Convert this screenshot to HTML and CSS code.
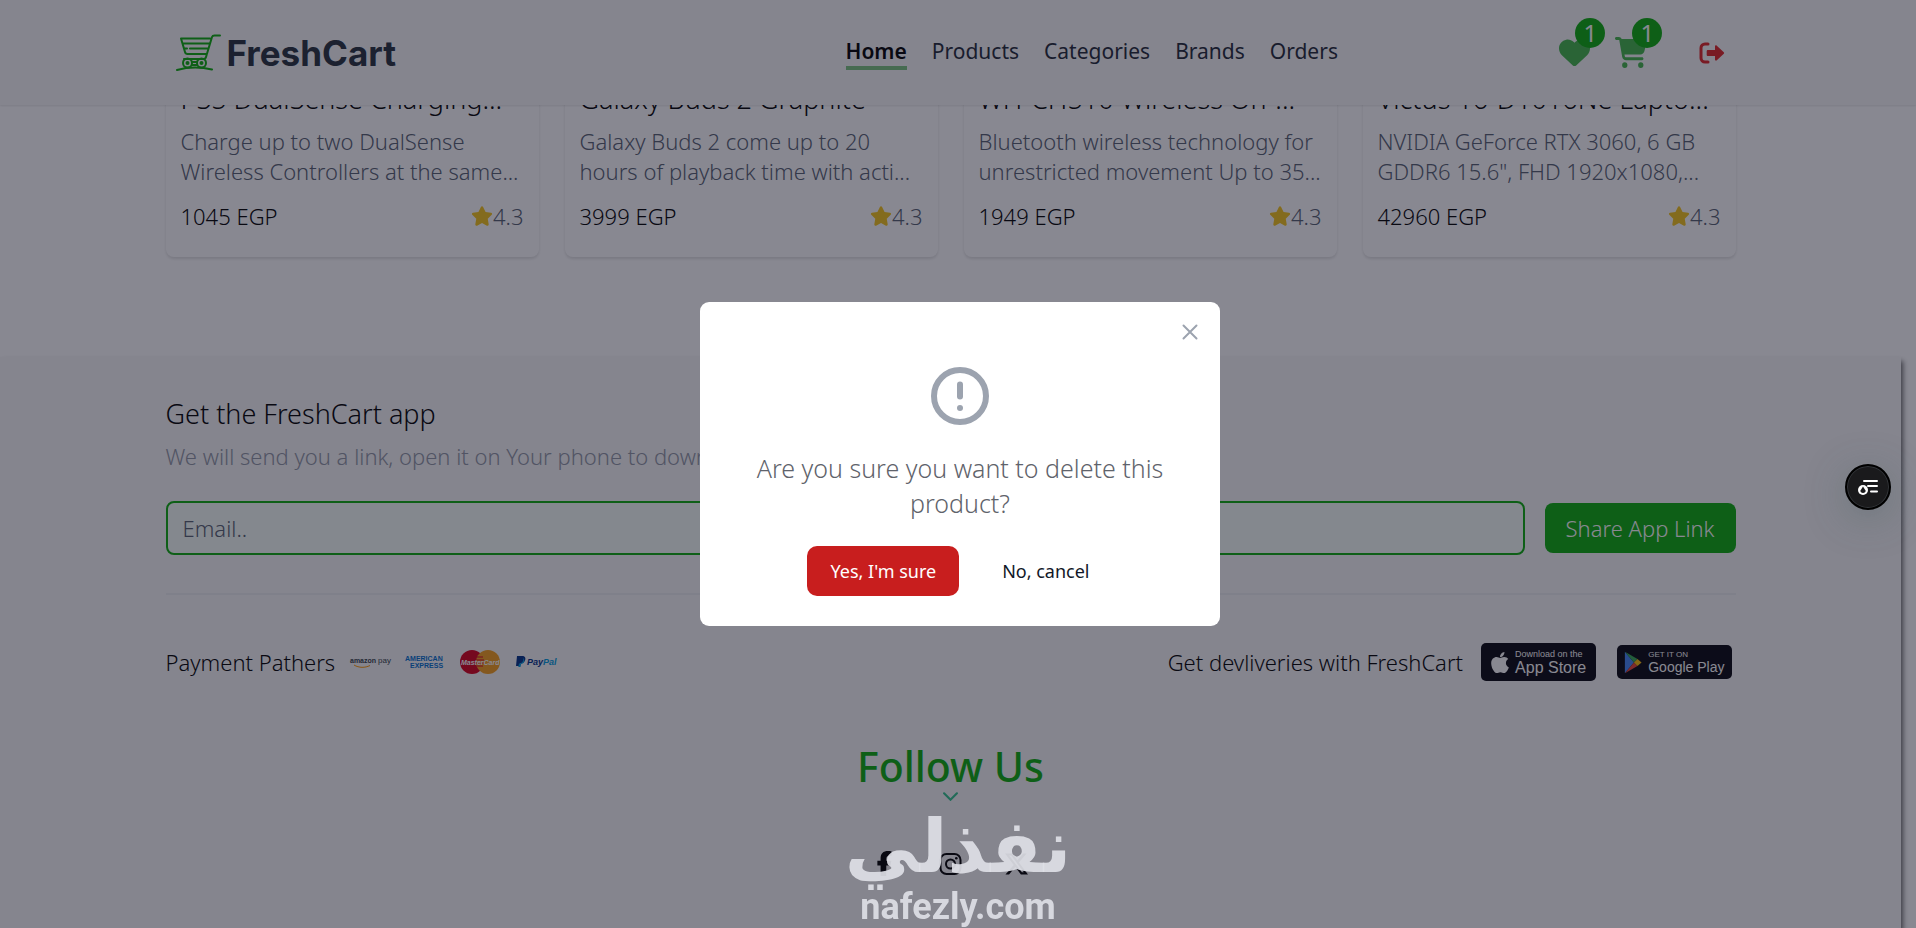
FILE: index.html
```html
<!DOCTYPE html>
<html lang="en">
<head>
<meta charset="utf-8">
<meta name="viewport" content="width=device-width, initial-scale=1">
<title>FreshCart</title>
<link rel="stylesheet" href="styles.css">
</head>
<body>
<svg class="sprite" aria-hidden="true">
  <symbol id="star" viewBox="0 0 576 512"><path d="M316.900 18C311.600 7 300.400 0 288.100 0s-23.400 7-28.800 18L195 150.300 51.400 171.500c-12 1.800-22 10.200-25.700 21.700s-.7 24.200 7.900 32.700L137.800 329 113.200 474.700c-2 12 3 24.200 12.900 31.300s23 8 33.800 2.300l128.300-68.500 128.300 68.500c10.800 5.700 23.900 4.900 33.800-2.300s14.900-19.300 12.900-31.300L438.500 329 542.700 225.900c8.600-8.500 11.700-21.200 7.900-32.700s-13.700-19.900-25.700-21.700L381.200 150.300 316.900 18z"/></symbol>
</svg>

<header class="header">
  <div class="container header-row">
    <a class="brand" href="#">
      <svg class="brand-icon" viewBox="0 0 45 37" aria-hidden="true">
        <g fill="none" stroke="#0aad0a" stroke-width="2" stroke-linecap="round" stroke-linejoin="round">
          <path d="M44 1.500h-5.500q-2 0-2.500 1.500L30 23q-.5 2-2.500 2H8M34 4.500H5l4 13.500q.5 2 2.500 2H31M7 9.500h26M9 14.500h2M14 14.500h18M1 36c11-3 24-3 35-.5"/>
          <circle cx="11.500" cy="29" r="4.500"/><circle cx="25.500" cy="29" r="4.500"/><circle cx="11.500" cy="29" r="1"/><circle cx="25.500" cy="29" r="1"/><path d="M16 28h5M16 31h5"/>
        </g>
      </svg>
      <span>FreshCart</span>
    </a>
    <nav class="nav">
      <a class="active" href="#">Home</a>
      <a href="#">Products</a>
      <a href="#">Categories</a>
      <a href="#">Brands</a>
      <a href="#">Orders</a>
    </nav>
    <div class="actions">
      <a class="action" href="#" aria-label="Wishlist">
        <svg class="icon-heart" viewBox="0 0 512 512" preserveAspectRatio="none" aria-hidden="true"><path d="M47.600 300.400L228.300 469.100c7.500 7 17.400 10.900 27.700 10.900s20.200-3.900 27.700-10.900L464.400 300.400c30.400-28.300 47.600-68 47.600-109.500v-5.800c0-69.900-50.500-129.500-119.400-141C347 36.500 300.600 51.400 268 84L256 96 244 84c-32.600-32.600-79-47.500-124.600-39.900C50.500 55.600 0 115.200 0 185.100v5.800c0 41.500 17.200 81.200 47.600 109.500z"/></svg>
        <span class="count">1</span>
      </a>
      <a class="action" href="#" aria-label="Cart">
        <svg class="icon-cart" viewBox="0 0 576 512" preserveAspectRatio="none" aria-hidden="true"><path d="M0 24C0 10.700 10.700 0 24 0H69.500c22 0 41.500 12.800 50.600 32h411c26.300 0 45.500 25 38.600 50.400l-41 152.300c-8.500 31.400-37 53.300-69.500 53.300H170.700l5.400 28.500c2.200 11.300 12.100 19.500 23.600 19.500H488c13.300 0 24 10.700 24 24s-10.700 24-24 24H199.700c-34.600 0-64.300-24.600-70.700-58.500L77.400 54.500c-.7-3.800-4-6.500-7.900-6.500H24C10.700 48 0 37.300 0 24zM128 464a48 48 0 1 1 96 0 48 48 0 1 1-96 0zm336-48a48 48 0 1 1 0 96 48 48 0 1 1 0-96z"/></svg>
        <span class="count">1</span>
      </a>
      <button class="logout" type="button" aria-label="Log out">
        <svg viewBox="0 0 26 22" aria-hidden="true"><path d="M9 2H6a4 4 0 0 0-4 4v10a4 4 0 0 0 4 4h3" fill="none" stroke="#e02424" stroke-width="3" stroke-linecap="round"/><path d="M9 8h7V4.500c0-1 1-1.500 1.800-.8l7 6.500c.5.500.5 1.100 0 1.600l-7 6.500c-.8.700-1.800.2-1.800-.8V14H9c-.8 0-1.300-.5-1.300-1.300V9.300C7.700 8.500 8.200 8 9 8z" fill="#e02424"/></svg>
      </button>
    </div>
  </div>
</header>

<main class="container products">
  <article class="card">
    <h3>PS5 DualSense Charging...</h3>
    <p>Charge up to two DualSense<br>Wireless Controllers at the same...</p>
    <div class="card-foot"><span>1045 EGP</span><span class="rating"><svg aria-hidden="true"><use href="#star"/></svg>4.3</span></div>
  </article>
  <article class="card">
    <h3>Galaxy Buds 2 Graphite</h3>
    <p>Galaxy Buds 2 come up to 20<br>hours of playback time with acti...</p>
    <div class="card-foot"><span>3999 EGP</span><span class="rating"><svg aria-hidden="true"><use href="#star"/></svg>4.3</span></div>
  </article>
  <article class="card">
    <h3>WH-CH510 Wireless On-...</h3>
    <p>Bluetooth wireless technology for<br>unrestricted movement Up to 35...</p>
    <div class="card-foot"><span>1949 EGP</span><span class="rating"><svg aria-hidden="true"><use href="#star"/></svg>4.3</span></div>
  </article>
  <article class="card">
    <h3>Victus 16-D1016Ne Lapto...</h3>
    <p>NVIDIA GeForce RTX 3060, 6 GB<br>GDDR6 15.6", FHD 1920x1080,...</p>
    <div class="card-foot"><span>42960 EGP</span><span class="rating"><svg aria-hidden="true"><use href="#star"/></svg>4.3</span></div>
  </article>
</main>

<footer class="footer">
  <div class="container">
    <h2 class="app-title">Get the FreshCart app</h2>
    <p class="app-text"><label for="email">We will send you a link, open it on Your phone to download the app</label></p>
    <form class="app-form">
      <input id="email" type="email" placeholder="Email..">
      <button type="button">Share App Link</button>
    </form>
    <div class="partners">
      <div class="payments">
        <span>Payment Pathers</span>
        <svg class="pay" viewBox="0 0 40 26" role="img" aria-label="amazon pay">
          <text x="0" y="14" font-size="7" fill="#333e48"><tspan font-weight="700">amazon</tspan></text><text x="28" y="14" font-size="8" fill="#333e48">pay</text>
          <path d="M4 16c5 3 11 3 16 .5" fill="none" stroke="#f90" stroke-width="1"/>
        </svg>
        <svg class="pay" viewBox="0 0 40 26" role="img" aria-label="American Express">
          <g fill="#006fcf" font-weight="700" font-size="7"><text x="0" y="12">AMERICAN</text><text x="5" y="19">EXPRESS</text></g>
        </svg>
        <svg class="pay" viewBox="0 0 40 26" role="img" aria-label="MasterCard">
          <circle cx="12" cy="13" r="12" fill="#d9001b"/><circle cx="28" cy="13" r="12" fill="#f79f1a"/>
          <path d="M17 8h6M16 11h8M16 14h8M17 17h6" stroke="#d9001b" stroke-width="1"/>
          <text x="1" y="16" font-size="7" font-weight="700" font-style="italic" fill="#fff">MasterCard</text>
        </svg>
        <svg class="pay" viewBox="0 0 40 26" role="img" aria-label="PayPal">
          <path d="M2 7h5c3 0 4 2 3 4.500S7.500 14 5.500 14L5 17H1z" fill="#003087"/><path d="M8 9c1 3-1 5.500-4 5.500L3.300 18H5.500l.6-3c3 0 4.400-4 1.900-6z" fill="#009cde"/>
          <text x="12" y="16" font-size="9" font-weight="700" font-style="italic" fill="#003087">Pay<tspan fill="#009cde">Pal</tspan></text>
        </svg>
      </div>
      <div class="stores">
        <span>Get devliveries with FreshCart</span>
        <a class="store app-store" href="#">
          <svg viewBox="0 0 384 512" aria-hidden="true"><path fill="#fff" d="M318.700 268.700c-.2-36.700 16.400-64.400 50-84.800-18.800-26.900-47.200-41.700-84.700-44.600-35.500-2.800-74.300 20.700-88.500 20.700-15 0-49.400-19.700-76.400-19.700C63.300 141.200 4 184.800 4 273.500q0 39.300 14.400 81.200c12.800 36.700 59 126.700 107.200 125.200 25.200-.6 43-17.900 75.800-17.900 31.800 0 48.300 17.900 76.400 17.900 48.600-.7 90.400-82.500 102.600-119.300-65.200-30.700-61.700-90-61.700-91.900zm-56.600-164.200c27.300-32.400 24.800-61.900 24-72.500-24.100 1.400-52 16.400-67.900 34.900-17.500 19.800-27.800 44.300-25.600 71.900 26.100 2 49.900-11.400 69.500-34.300z"/></svg>
          <span><small>Download on the</small><b>App Store</b></span>
        </a>
        <a class="store google-play" href="#">
          <svg viewBox="0 0 20 26" aria-hidden="true"><path d="M1 1v24l10-12z" fill="#4285f4"/><path d="M1 1l14 8-4 4z" fill="#34a853"/><path d="M1 25l14-8-4-4z" fill="#ea4335"/><path d="M15 9l4.500 4-4.500 4-4-4z" fill="#fbbc04"/></svg>
          <span><small>GET IT ON</small><b>Google Play</b></span>
        </a>
      </div>
    </div>
    <section class="follow">
      <h2>Follow Us</h2>
      <svg class="chevron" viewBox="0 0 14 8" aria-hidden="true"><path d="M1 1l6 6 6-6" fill="none" stroke="#31c48d" stroke-width="2" stroke-linecap="round"/></svg>
      <div class="social">
        <a href="#" aria-label="Facebook"><svg viewBox="0 0 320 512" aria-hidden="true"><path d="M80 299.300V512H196V299.300h86.500l18-97.800H196V166.900c0-51.700 20.300-71.500 72.700-71.500 16.300 0 29.400.4 37 1.200V7.900C291.400 4 256.400 0 236.200 0 129.300 0 80 50.500 80 159.400v42.100H14v97.800H80z"/></svg></a>
        <a href="#" aria-label="Instagram"><svg viewBox="0 0 22 22" aria-hidden="true"><rect x="1" y="1" width="20" height="20" rx="6" fill="none" stroke="#000" stroke-width="2"/><circle cx="11" cy="11" r="4.500" fill="none" stroke="#000" stroke-width="2"/><circle cx="16.800" cy="5.200" r="1.300"/></svg></a>
        <a href="#" aria-label="X"><svg viewBox="26 48 461 416" aria-hidden="true"><path d="M389.200 48h70.600L305.600 224.200 487 464H345L233.700 318.600 106.500 464H35.800L200.700 275.500 26.800 48H172.400L272.900 180.900 389.200 48zM364.400 421.800h39.100L151.100 88h-42L364.400 421.800z"/></svg></a>
      </div>
    </section>
  </div>
</footer>

<div class="overlay">
  <div class="modal" role="dialog" aria-modal="true" aria-labelledby="question">
    <button class="close" type="button" aria-label="Close"><svg viewBox="0 0 16 16" aria-hidden="true"><path d="M1.500 1.500l13 13M14.500 1.500l-13 13" fill="none" stroke="#9ca3af" stroke-width="2" stroke-linecap="round"/></svg></button>
    <svg class="alert" viewBox="0 0 58 58" aria-hidden="true"><circle cx="29" cy="29" r="26" fill="none" stroke="#9ca3af" stroke-width="6"/><path d="M29 17.500v12" stroke="#9ca3af" stroke-width="6" stroke-linecap="round"/><circle cx="29" cy="41" r="3" fill="#9ca3af"/></svg>
    <h3 id="question">Are you sure you want to delete this product?</h3>
    <div class="buttons">
      <button class="yes" type="button">Yes, I'm sure</button>
      <button class="no" type="button">No, cancel</button>
    </div>
  </div>
</div>

<button class="float" type="button" aria-label="Reading tools">
  <svg viewBox="0 0 20 16" aria-hidden="true"><path d="M6 2H19M10 7h9M13 12.500h6" stroke="#fff" stroke-width="2" stroke-linecap="round"/><circle cx="5" cy="11" r="5" fill="#fff"/><path d="M5 7.500l2.500 4c.5 1.500-1 2.500-2.500 2.500s-3-1-2.500-2.500z" fill="#1a1a1c"/></svg>
</button>

<div class="watermark">
  <span class="wm-ar" lang="ar" dir="rtl">نفذلي</span>
  <span class="wm-en">nafezly.com</span>
</div>
</body>
</html>
```
FILE: styles.css
```css
* { box-sizing: border-box; }
body {
  margin: 0;
  padding-right: 15px;
  min-height: 100vh;
  display: flex;
  flex-direction: column;
  overflow: hidden;
  background: #fff;
  color: #000;
  font-family: "Noto Sans", "Open Sans", sans-serif;
  font-size: 22px;
  font-weight: 300;
  line-height: 30px;
}
h2, h3, p { margin: 0; font-weight: 300; }
a { color: inherit; text-decoration: none; }
button { border: 0; padding: 0; background: none; font: inherit; cursor: pointer; }
svg { display: block; }
.sprite { position: absolute; width: 0; height: 0; }
.container { width: calc(100% - 48px); max-width: 1570px; margin: 0 auto; }

.header {
  position: relative;
  z-index: 1;
  margin-right: -15px;
  padding-right: 15px;
  background: #f8f8f8;
  box-shadow: 0 1px 2px rgba(0, 0, 0, .1);
}
.header-row { display: flex; align-items: center; justify-content: space-between; height: 105px; padding: 0 10px; }
.brand { display: flex; align-items: center; gap: 6px; font: 700 35px/44px Inter, sans-serif; color: #26303c; }
.brand-icon { width: 45px; height: 37px; }
.nav { display: flex; gap: 25px; margin-left: 228px; padding-top: 2px; font-size: 21px; font-weight: 400; color: #1f2937; }
.nav a { border-bottom: 4px solid transparent; line-height: 29px; }
.nav .active { font-weight: 600; border-color: #7bc47f; color: #000; }
.actions { display: flex; align-items: center; gap: 25px; }
.action { position: relative; }
.action svg { fill: #42b649; }
.icon-heart { width: 31px; height: 31px; }
.icon-cart { width: 32px; height: 31px; }
.count {
  position: absolute;
  right: -15px;
  top: -19px;
  width: 30px;
  height: 30px;
  border-radius: 50%;
  background: #0aad0a;
  color: #fff;
  font-size: 24px;
  font-weight: 400;
  text-align: center;
}
.logout { margin-left: 27px; }
.logout svg { width: 26px; height: 22px; }

.products { display: grid; grid-template-columns: repeat(4, 1fr); gap: 26px; margin-top: -24px; }
.card { padding: 0 15px 26px; border-radius: 8px; box-shadow: 0 2px 3px rgba(0, 0, 0, .12); }
.card h3 { font-size: 27px; line-height: 36px; white-space: nowrap; }
.card p { margin-top: 9px; color: #566070; white-space: nowrap; }
.card-foot { display: flex; justify-content: space-between; margin-top: 15px; }
.rating { display: flex; align-items: center; color: #566070; }
.rating svg { width: 22px; height: 20px; fill: #f5c518; }

.footer {
  flex: 1;
  margin-top: 100px;
  padding-top: 38px;
  background: #f8f8f8;
  box-shadow: 2px 4px 5px rgba(0, 0, 0, .6);
}
.app-title { font-size: 27px; line-height: 38px; }
.app-text { margin-top: 8px; color: #9096a4; }
.app-form { display: flex; align-items: center; gap: 20px; margin-top: 30px; padding-bottom: 38px; border-bottom: 2px solid #eceef0; }
.app-form input {
  flex: 1;
  height: 54px;
  padding: 0 15px;
  border: 2px solid #0aad0a;
  border-radius: 8px;
  background: #f6fff8;
  font: inherit;
}
.app-form input::placeholder { color: #566070; opacity: 1; }
.app-form button { height: 50px; padding: 0 21px; border-radius: 8px; background: #0aad0a; color: #fff; }
.partners { display: flex; align-items: center; justify-content: space-between; margin-top: 48px; padding-right: 4px; }
.payments { display: flex; align-items: center; gap: 15px; }
.stores { display: flex; align-items: center; gap: 18px; }
.pay { width: 40px; height: 26px; overflow: visible; font-family: "Liberation Sans", sans-serif; }
.store { display: flex; align-items: center; gap: 6px; padding: 0 10px; border-radius: 5px; background: #06060e; color: #fff; font-family: "Liberation Sans", sans-serif; white-space: nowrap; }
.store small, .store b { display: block; font-weight: 400; }
.store small { font-size: 9px; line-height: 10px; }
.store b { font-size: 16px; line-height: 17px; }
.store svg { width: 18px; height: 25px; }
.app-store { height: 38px; }
.google-play { height: 34px; margin-left: 3px; padding: 0 7px; }
.google-play b { font-size: 14px; line-height: 15px; }
.google-play small { font-size: 8px; }

.follow { display: flex; flex-direction: column; align-items: center; margin-top: 55px; }
.follow h2 { font-size: 41px; font-weight: 500; line-height: 60px; color: #0aad0a; }
.chevron { width: 15px; height: 9px; margin-top: -4px; }
.social { display: flex; align-items: center; gap: 43px; margin-top: 50px; }
.social svg { width: 23px; height: 25px; }
.social a:nth-child(n+2) svg { height: 22px; }

.overlay {
  position: fixed;
  inset: 0;
  z-index: 2;
  display: flex;
  align-items: center;
  justify-content: center;
  padding-left: 4px;
  background: rgba(17, 17, 36, .5);
}
.modal { position: relative; width: 520px; padding: 65px 40px 30px; border-radius: 9px; background: #fff; text-align: center; }
.close { position: absolute; right: 22px; top: 22px; }
.close svg { width: 16px; height: 16px; }
.alert { width: 58px; height: 58px; margin: 0 auto; }
.modal h3 { margin-top: 26px; font-size: 25px; line-height: 35px; color: #5f636b; }
.buttons { display: flex; justify-content: center; gap: 20px; margin-top: 25px; font-size: 18px; font-weight: 400; }
.buttons button { height: 50px; padding: 0 23px; border-radius: 10px; }
.yes { background: #c81e1e; color: #fff; }
.no { color: #111827; }

.float {
  position: fixed;
  z-index: 3;
  right: 25px;
  top: 464px;
  display: grid;
  place-items: center;
  width: 46px;
  height: 46px;
  border: 2px solid #000;
  border-radius: 50%;
  background: #1a1a1c;
  box-shadow: 0 0 0 1px #33363a inset, 0 8px 40px rgba(60, 90, 90, .35);
}
.float svg { width: 20px; height: 16px; }

.watermark {
  position: fixed;
  z-index: 4;
  left: 0;
  right: 0;
  bottom: 0;
  display: flex;
  flex-direction: column;
  align-items: center;
  color: rgba(222, 223, 230, .92);
  font-weight: 700;
}
.wm-ar { font-family: "DejaVu Sans", sans-serif; font-size: 74px; line-height: 80px; }
.wm-en { font-family: Roboto, sans-serif; font-size: 36px; line-height: 42px; }
```
